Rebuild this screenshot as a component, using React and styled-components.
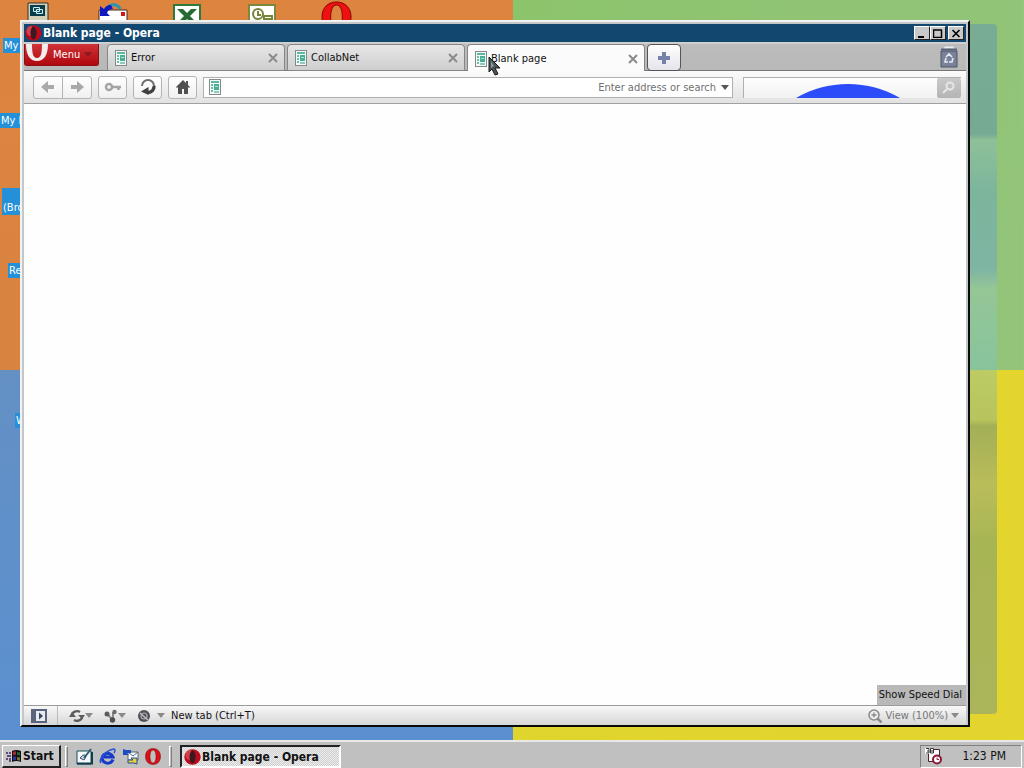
import React, { useState } from "react";
import styled, { createGlobalStyle, css } from "styled-components";

const GlobalStyle = createGlobalStyle`
  * {
    box-sizing: border-box;
  }

  body {
    margin: 0;
    font-family: "DejaVu Sans Condensed", "DejaVu Sans", Tahoma, sans-serif;
    font-size: 11px;
    line-height: 14px;
    color: #111;
  }

  button,
  input {
    font: inherit;
    color: inherit;
    margin: 0;
    padding: 0;
  }

  svg {
    display: block;
    flex: none;
  }
`;

const OperaIcon = () => (
  <svg width="17" height="16" viewBox="0 0 16 16" preserveAspectRatio="none">
    <ellipse cx="8" cy="8" rx="7.7" ry="7.8" fill="#b80c1c" />
    <ellipse cx="5" cy="6" rx="3.6" ry="5" fill="#e8606a" opacity="0.6" />
    <ellipse cx="8" cy="8" rx="2.8" ry="6.4" fill="#3c1820" />
  </svg>
);

const OperaRing = ({ width, height, color }) => (
  <svg width={width} height={height} viewBox="0 0 32 32" preserveAspectRatio="none">
    <path
      fillRule="evenodd"
      fill={color}
      stroke="#7c0808"
      strokeWidth="1"
      d="M16 1C7 1 1 7 1 16s6 15 15 15 15-6 15-15S25 1 16 1zM16 4c4 0 6 5 6 12s-2 12-6 12-6-5-6-12 2-12 6-12z"
    />
  </svg>
);

const MenuRing = () => (
  <svg width="24" height="18" viewBox="0 0 24 18">
    <path
      fill="#f3ecec"
      d="M1 0c0 11 4 17 11 17S23 11 23 0h-6c0 9-1 14-5 14S7 9 7 0z"
    />
  </svg>
);

const PageIcon = () => (
  <svg width="12" height="16" viewBox="0 0 12 16">
    <rect x="0.5" y="0.5" width="11" height="15" fill="#f4faf8" stroke="#85898c" />
    <rect x="2" y="2" width="8" height="2" fill="#5cb9a0" />
    <path d="M3 5v9" stroke="#6bbfa8" strokeWidth="2" strokeDasharray="2 1" />
    <rect x="5" y="5" width="5" height="6" fill="#46b096" />
    <path d="M6 7.5h3" stroke="#b5ddd2" />
    <path d="M5 13h5" stroke="#8accb9" strokeWidth="2" />
  </svg>
);

const CloseIcon = () => (
  <svg width="10" height="10" viewBox="0 0 10 10">
    <path d="M1 1l8 8M9 1l-8 8" stroke="#8b8b8b" strokeWidth="2" />
  </svg>
);

const Arrow = ({ flip }) => (
  <svg width="16" height="14" viewBox="0 0 16 14">
    <path
      d="M1 7l7-6v4h6v4H8v4z"
      fill="#a9a9a9"
      transform={flip ? "matrix(-1 0 0 1 16 0)" : undefined}
    />
  </svg>
);

const KeyIcon = () => (
  <svg width="18" height="12" viewBox="0 0 18 12">
    <circle cx="5" cy="6" r="3" fill="none" stroke="#a5a5a5" strokeWidth="2.6" />
    <path d="M8 6h9M14.5 6v3" stroke="#a5a5a5" strokeWidth="2.6" />
  </svg>
);

const ReloadIcon = () => (
  <svg width="18" height="18" viewBox="0 0 18 18">
    <path d="M3 8A6 6 0 0 1 15 8" fill="none" stroke="#6c6c6c" strokeWidth="2" />
    <path d="M15 8a6 6 0 0 1-6 6.500" fill="none" stroke="#404040" strokeWidth="3.400" />
    <path d="M9.500 9v8L2 13.500z" fill="#404040" />
  </svg>
);

const HomeIcon = () => (
  <svg width="16" height="16" viewBox="0 0 16 16">
    <path d="M8 1l7 7-1 1-1-1v7H9v-5H7v5H3V8L2 9 1 8zM11 2h2v4l-2-2z" fill="#505050" />
  </svg>
);

const PlusIcon = () => (
  <svg width="12" height="12" viewBox="0 0 12 12">
    <path d="M4 0h4v4h4v4H8v4H4V8H0V4h4z" fill="#7680a8" />
  </svg>
);

const TrashIcon = () => (
  <svg width="18" height="22" viewBox="0 0 18 22">
    <path d="M5.5 3V1.5h7V3" fill="none" stroke="#e8eef8" strokeWidth="2" />
    <path d="M1 3.5h16" stroke="#5c6478" strokeWidth="2" />
    <path d="M1 5h16v16H1z" fill="#7a829a" stroke="#4c5468" />
    <path
      d="M6 11l3-3 3 3M13 12l-1 4H9M8 16H5l1-4"
      fill="none"
      stroke="#e4e9f4"
      strokeWidth="1.6"
    />
  </svg>
);

const SearchIcon = () => (
  <svg width="16" height="14" viewBox="0 0 16 14">
    <circle cx="9" cy="5" r="3.5" fill="none" stroke="#e6e6e6" strokeWidth="2" />
    <path d="M6 8l-4 4" stroke="#e6e6e6" strokeWidth="2" />
  </svg>
);

const Caret = ({ color = "#8a8a8a" }) => (
  <svg width="8" height="5" viewBox="0 0 8 5">
    <path d="M0 0h8L4 5z" fill={color} />
  </svg>
);

const PanelIcon = () => (
  <svg width="16" height="14" viewBox="0 0 16 14">
    <rect x="1" y="1" width="14" height="12" fill="#e8ebf0" stroke="#5a647c" strokeWidth="2" />
    <rect x="1" y="1" width="4" height="12" fill="#5a647c" />
    <path d="M8 3.5l4 3.5-4 3.5z" fill="#38445c" />
  </svg>
);

const SyncIcon = () => (
  <svg width="16" height="14" viewBox="0 0 16 14">
    <path d="M3 6a5 4 0 0 1 8-3M13 8a5 4 0 0 1-8 3" fill="none" stroke="#5c5c5c" strokeWidth="2.4" />
    <path d="M9 6h7l-3 4zM0 8h7l-4-5z" fill="#5c5c5c" />
  </svg>
);

const ShareIcon = () => (
  <svg width="14" height="14" viewBox="0 0 14 14">
    <path d="M3 5l6 6M9 3l0 8" stroke="#8c8c8c" strokeWidth="2" />
    <circle cx="3" cy="5" r="2.5" fill="#5c5c5c" />
    <circle cx="10.500" cy="3" r="2.200" fill="#6c6c6c" />
    <circle cx="8.500" cy="11" r="2.700" fill="#505050" />
  </svg>
);

const TurboIcon = () => (
  <svg width="14" height="14" viewBox="0 0 14 14">
    <circle cx="7" cy="7" r="6" fill="#505058" />
    <circle cx="7" cy="7" r="3" fill="none" stroke="#aaaab2" strokeWidth="1.2" />
    <path d="M3 4l8 7" stroke="#c0c0c8" strokeWidth="1.3" />
  </svg>
);

const ZoomIcon = () => (
  <svg width="14" height="14" viewBox="0 0 14 14">
    <circle cx="6" cy="6" r="5" fill="#eee" stroke="#8a8a8a" strokeWidth="1.5" />
    <path d="M3.500 6h5M6 3.500v5" stroke="#8a8a8a" strokeWidth="1.300" />
    <path d="M9.500 9.500l4 4" stroke="#8a8a8a" strokeWidth="2.500" />
  </svg>
);

const Cursor = () => (
  <svg width="13" height="21" viewBox="0 0 13 21">
    <path d="M1 1v15l3-3 3 6 3-1-3-6h5z" fill="#4c5658" stroke="#16191a" />
    <path d="M3 5v7l3-2z" fill="#85979a" />
  </svg>
);

const ComputerIcon = () => (
  <svg width="22" height="20" viewBox="0 0 22 20">
    <path d="M1 2h20v18H1z" fill="#d4d0b8" stroke="#333" />
    <path d="M3 4h15v11H3z" fill="#073c48" />
    <path d="M6.500 6.500h6v4h-6zM9.500 8.500h6v4h-6z" fill="#164a58" stroke="#c8f0f0" />
  </svg>
);

const MailIcon = () => (
  <svg width="30" height="20" viewBox="0 0 30 20">
    <path d="M1 8h28v12H1z" fill="#fff" stroke="#4a2a18" />
    <path d="M23 10h4v4h-4z" fill="#d01818" />
    <path d="M10 6c2-5 10-4 12 1" fill="none" stroke="#2b94b0" strokeWidth="3" />
    <path d="M2 4v10h10l-3-3c1-3 3-4 6-4l-2-4c-4 0-6 2-7 4z" fill="#1018c0" />
  </svg>
);

const ExcelIcon = () => (
  <svg width="28" height="20" viewBox="0 0 28 20">
    <rect x="1" y="1" width="26" height="20" fill="#fff" stroke="#2f7a3a" strokeWidth="2" />
    <path d="M4 5h6l4 4 4-4h6l-7 7 7 7h-6l-4-4-4 4H4l7-7z" fill="#276b34" />
  </svg>
);

const OutlookIcon = () => (
  <svg width="28" height="20" viewBox="0 0 28 20">
    <rect x="1" y="1" width="26" height="20" fill="#fff" stroke="#7a8a3a" strokeWidth="2" />
    <circle cx="10" cy="10" r="5" fill="none" stroke="#77853b" strokeWidth="2" />
    <path d="M10 7v4h3M16 12h8v3h-8zM22 14v5" fill="none" stroke="#77853b" strokeWidth="2" />
  </svg>
);

const WindowsIcon = () => (
  <svg width="16" height="14" viewBox="0 0 16 14">
    <path d="M6 2q4-2 9 0v11q-5-2-9 0z" fill="#111" />
    <path d="M7 3q2-1 3-.5V6q-1-.5-3 .5z" fill="#a82838" />
    <path d="M11 3q2 0 3 .5V7q-1-1-3-1z" fill="#206838" />
    <path d="M7 8q2-1 3-.5V11q-1-.5-3 .5z" fill="#2838a0" />
    <path d="M11 8q2 0 3 .5V12q-1-1-3-1z" fill="#807030" />
    <path d="M0 4h2M3 4h2M1 7h4M0 10h2M3 10h2M3 12h2" stroke="#402060" strokeWidth="1.500" />
  </svg>
);

const NoteIcon = () => (
  <svg width="17" height="17" viewBox="0 0 17 17">
    <path d="M1 3h14v13H1z" fill="#f4f8f8" stroke="#1c4c60" />
    <path d="M1 15.500h15V4" fill="none" stroke="#123c50" strokeWidth="2" />
    <path d="M4 10q3-4 5-3t-1 5z" fill="#c5dde0" stroke="#447" />
    <path d="M8 10l7-9" stroke="#2c6070" strokeWidth="2" />
  </svg>
);

const ExplorerIcon = () => (
  <svg width="17" height="17" viewBox="0 0 17 17">
    <path d="M14 11.500A5.500 5 0 1 1 14 9H5" fill="none" stroke="#1838c8" strokeWidth="3" />
    <path d="M2 15C-1 12 7 2 15 1q2 1 0 4" fill="none" stroke="#2452d8" strokeWidth="1.500" />
  </svg>
);

const OutlookExpressIcon = () => (
  <svg width="17" height="17" viewBox="0 0 17 17">
    <path d="M6 4h10v8H6z" fill="#fff" stroke="#567" />
    <path d="M6 4l5 4 5-4" fill="none" stroke="#567" />
    <path d="M1 1v6h6L5 5h4V2H4z" fill="#1c4cc0" />
    <path d="M15 16v-6H9l2 2H6v3h6z" fill="#e4d040" stroke="#234a90" />
  </svg>
);

const SchedulerIcon = () => (
  <svg width="18" height="18" viewBox="0 0 18 18">
    <path d="M3.500 2.500h11v12h-11z" fill="#fff" stroke="#502030" />
    <path d="M0 1h9v6H0z" fill="#fff" />
    <path d="M1 1.500h3V6H1M2 4h2M5.500 1.500h3v4.500h-3zM6 4h2" fill="none" stroke="#333" />
    <circle cx="12" cy="12.500" r="4" fill="#fff" stroke="#8c1838" strokeWidth="2" />
    <path d="M12 10.500v2h2" fill="none" stroke="#8c1838" />
  </svg>
);

const Screen = styled.div`
  min-height: 100vh;
  display: flex;
  flex-direction: column;
`;

const Desktop = styled.main`
  position: relative;
  flex: 1;
  display: flex;
  padding: 20px 54px 13px 20px;
  overflow: hidden;
  background: linear-gradient(#dd843f, #d98341) 0 0 / 50.1% 50% no-repeat,
    linear-gradient(100deg, #8cc46c, #93c47a) 100% 0 / 49.9% 50% no-repeat,
    linear-gradient(#6490c4, #5a90d0) 0 100% / 50.1% 50% no-repeat,
    linear-gradient(90deg, #dfd52d, #e4d42e) 100% 100% / 49.9% 50% no-repeat;
`;

const GlassPanel = styled.div`
  position: absolute;
  inset: 24px 27px 26px 60px;
  border-radius: 4px;
  background: linear-gradient(
    rgba(100, 152, 170, 0.55) 0,
    rgba(100, 152, 165, 0.6) 110px,
    rgba(140, 190, 175, 0.6) 116px,
    rgba(112, 172, 175, 0.65) 170px,
    rgba(116, 172, 185, 0.65) 245px,
    rgba(150, 200, 170, 0.6) 265px,
    rgba(130, 195, 180, 0.6) 345px,
    rgba(150, 195, 150, 0.5) 347px,
    rgba(140, 180, 140, 0.5) 396px,
    rgba(120, 150, 115, 0.6) 402px,
    rgba(150, 170, 125, 0.55) 460px,
    rgba(128, 160, 110, 0.6) 520px,
    rgba(134, 160, 120, 0.6) 100%
  );
`;

const Shortcut = styled.div`
  position: absolute;
  left: ${(p) => p.$left}px;
  top: ${(p) => p.$top}px;
`;

const ShortcutLabel = styled(Shortcut)`
  padding: ${(p) => (p.$tall ? "13px" : "1px")} 2px 0 1px;
  background: #2490d8;
  color: #fff;
  white-space: nowrap;
`;

const Window = styled.section`
  position: relative;
  flex: 1;
  min-width: 0;
  display: flex;
  flex-direction: column;
  padding: 2px 2px 0;
  background: #c3c7c9;
  border: 2px solid;
  border-color: #f2f2f2 #0a0a0a #0a0a0a #f2f2f2;
`;

const TitleBar = styled.header`
  display: flex;
  align-items: center;
  height: 18px;
  padding: 0 2px 0 1px;
  background: #12486f;
  color: #fff;
  font-size: 12px;
  font-weight: bold;
`;

const TitleText = styled.h1`
  flex: 1;
  margin: 0 0 0 1px;
  font: inherit;
  font-weight: bold;
`;

const raised = css`
  background: #c9c9c9;
  border: 1px solid;
  border-color: #fff #222 #222 #fff;
`;

const CaptionButton = styled.button`
  ${raised}
  display: grid;
  place-items: center;
  width: 16px;
  height: 14px;
  margin-left: ${(p) => (p.$spaced ? "2px" : "0")};
`;

const TabBar = styled.nav`
  display: flex;
  height: 29px;
  padding-right: 8px;
  border-top: 2px solid #cfcfcf;
  border-bottom: 1px solid #777;
  background: linear-gradient(#bcbcbc, #b8b8b8);
`;

const MenuButton = styled.button`
  display: flex;
  align-items: center;
  gap: 4px;
  width: 75px;
  height: 22px;
  margin-right: 8px;
  border: 1px solid #8a1016;
  border-top: 0;
  border-radius: 0 0 3px 3px;
  background: linear-gradient(#cf3338, #b0080f);
  color: #fff;

  svg:first-child {
    align-self: flex-start;
  }
`;

const Tab = styled.div`
  display: flex;
  align-items: center;
  gap: 4px;
  width: 178px;
  height: ${(p) => (p.$active ? "28px" : "27px")};
  margin-right: 2px;
  padding: 0 6px 0 7px;
  border: 1px solid #868686;
  border-bottom-width: ${(p) => (p.$active ? "0" : "1px")};
  border-radius: 4px 4px 0 0;
  background: ${(p) =>
    p.$active ? "#fbfbfb" : "linear-gradient(#e6e6e6, #cfcfcf)"};
`;

const TabLabel = styled.button`
  flex: 1;
  display: flex;
  align-items: center;
  gap: 4px;
  border: 0;
  background: none;
  text-align: left;
`;

const PlainButton = styled.button`
  display: flex;
  align-items: center;
  gap: ${(p) => p.$gap || 0}px;
  border: 0;
  background: none;
  color: ${(p) => p.$color || "inherit"};
`;

const NewTab = styled.button`
  display: grid;
  place-items: center;
  width: 34px;
  height: 27px;
  border: 1px solid #555;
  border-radius: 4px;
  background: linear-gradient(#fff, #e4e4ea);
`;

const Spacer = styled.span`
  flex: 1;
`;

const Toolbar = styled.form`
  display: flex;
  align-items: center;
  gap: 6px;
  height: 33px;
  padding: 0 5px 0 9px;
  border-bottom: 1px solid #a0a0a0;
  background: linear-gradient(#fbfbfb, #e2e2e2);
`;

const ButtonGroup = styled.div`
  display: flex;
  width: ${(p) => (p.$pair ? "59px" : "29px")};
  height: 23px;
  border: 1px solid #b4b4b4;
  border-radius: 3px;
  background: linear-gradient(#fff, #f0f0f0);
`;

const ToolButton = styled.button`
  flex: 1;
  display: grid;
  place-items: center;
  border: 0;
  background: none;

  & + & {
    border-left: 1px solid #b4b4b4;
  }
`;

const AddressField = styled.label`
  flex: 1;
  display: flex;
  align-items: center;
  height: 21px;
  padding: 0 3px 0 5px;
  border: 1px solid #b0b0b0;
  background: #fff;
`;

const AddressInput = styled.input`
  flex: 1;
  min-width: 0;
  height: 100%;
  margin: 0 5px;
  padding-top: 1px;
  border: 0;
  outline: 0;
  background: none;
  text-align: right;

  &::placeholder {
    color: #707070;
    opacity: 1;
  }
`;

const SearchField = styled.label`
  flex: 0 1 218px;
  position: relative;
  display: flex;
  height: 21px;
  margin-left: 4px;
  border: 1px solid #b0b0b0;
  border-width: 1px 0 0 1px;
  background: linear-gradient(#fdfdfd, #f2f2f2);
`;

const SearchInput = styled.input`
  flex: 1;
  min-width: 0;
  border: 0;
  outline: 0;
  background: none;
`;

const Bump = styled.svg`
  position: absolute;
  left: 24%;
  bottom: 0;
`;

const SearchButton = styled.button`
  display: grid;
  place-items: center;
  width: 24px;
  border: 0;
  border-radius: 2px;
  background: linear-gradient(#cacaca, #b4b4b4);
`;

const Page = styled.article`
  flex: 1;
  display: flex;
  justify-content: flex-end;
  align-items: flex-end;
  background: #fefefe;
`;

const SpeedDial = styled.button`
  height: 20px;
  padding: 0 4px 0 2px;
  border: 0;
  background: #b9b9b9;
`;

const StatusBar = styled.footer`
  display: flex;
  align-items: center;
  height: 20px;
  padding: 0 7px;
  border-top: 1px solid #9c9c9c;
  background: linear-gradient(#f8f8f8, #d6d6d6);
`;

const StatusTools = styled.div`
  display: flex;
  align-items: center;
  gap: 11px;
  height: 100%;
  margin: 0 6px 0 10px;
  padding-left: 11px;
  border-left: 1px solid #bbb;
`;

const Pointer = styled.div`
  position: absolute;
  left: 466px;
  top: 34px;
  pointer-events: none;
`;

const Taskbar = styled.footer`
  position: relative;
  display: flex;
  align-items: center;
  height: 28px;
  padding: 2px 2px 0;
  border-top: 2px solid #e8e8e8;
  background: #c0c0c0;
`;

const StartButton = styled.button`
  ${raised}
  display: flex;
  align-items: center;
  gap: 1px;
  height: 23px;
  width: 59px;
  padding-left: 3px;
  border-width: 1px 2px 2px 1px;
  font-size: 12px;
  font-weight: bold;
`;

const Grip = styled.span`
  width: 3px;
  height: 21px;
  margin: 0 8px 0 ${(p) => p.$before}px;
  border: 1px solid;
  border-color: #fff #808080 #808080 #fff;
`;

const QuickLaunch = styled.div`
  display: flex;
  gap: 6px;
`;

const TaskButton = styled.button`
  display: flex;
  align-items: center;
  gap: 1px;
  width: 161px;
  height: 23px;
  padding: 1px 0 0 2px;
  border: 2px solid;
  border-color: #222 #fff #fff #222;
  background: repeating-conic-gradient(#ececec 0 25%, #d0d0d0 0 50%) 0 0 / 2px 2px;
  font-size: 12px;
  font-weight: bold;
`;

const Tray = styled.div`
  display: flex;
  align-items: center;
  justify-content: space-between;
  width: 102px;
  height: 23px;
  padding: 0 15px 0 4px;
  border: 1px solid;
  border-color: #808080 #fff #fff #808080;
  font-size: 12px;
`;

const shortcutLabels = [
  { text: "My", left: 3, top: 38 },
  { text: "My I", left: 0, top: 113 },
  { text: "(Bro", left: 2, top: 188, tall: true },
  { text: "Re", left: 8, top: 263 },
  { text: "W", left: 15, top: 413 },
];

const tabs = ["Error", "CollabNet", "Blank page"];

const App = () => {
  const [active, setActive] = useState("Blank page");

  return (
    <Screen>
      <GlobalStyle />
      <Desktop>
        <GlassPanel />
        <Shortcut $left={27} $top={1}><ComputerIcon /></Shortcut>
        <Shortcut $left={98} $top={2}><MailIcon /></Shortcut>
        <Shortcut $left={173} $top={4}><ExcelIcon /></Shortcut>
        <Shortcut $left={248} $top={4}><OutlookIcon /></Shortcut>
        <Shortcut $left={321} $top={1}>
          <OperaRing width={31} height={32} color="#f01010" />
        </Shortcut>
        {shortcutLabels.map((s) => (
          <ShortcutLabel key={s.text} $left={s.left} $top={s.top} $tall={s.tall}>
            {s.text}
          </ShortcutLabel>
        ))}
        <Window>
          <TitleBar>
            <OperaIcon />
            <TitleText>Blank page - Opera</TitleText>
            <CaptionButton type="button" aria-label="Minimize">
              <svg width="10" height="9" viewBox="0 0 10 9">
                <path d="M1 7h6v2H1z" />
              </svg>
            </CaptionButton>
            <CaptionButton type="button" aria-label="Maximize">
              <svg width="10" height="9" viewBox="0 0 10 9">
                <path d="M.5 1v7.500h8V1M0 1h9" fill="none" stroke="#000" strokeWidth="1.500" />
              </svg>
            </CaptionButton>
            <CaptionButton type="button" aria-label="Close" $spaced>
              <svg width="10" height="9" viewBox="0 0 10 9">
                <path d="M1.500 1l7 7M8.500 1l-7 7" stroke="#000" strokeWidth="1.600" />
              </svg>
            </CaptionButton>
          </TitleBar>
          <TabBar>
            <MenuButton type="button">
              <MenuRing />
              Menu
              <Caret color="#8c1a1e" />
            </MenuButton>
            {tabs.map((name) => (
              <Tab key={name} $active={name === active}>
                <TabLabel type="button" onClick={() => setActive(name)}>
                  <PageIcon />
                  {name}
                </TabLabel>
                <PlainButton type="button" aria-label={`Close ${name}`}>
                  <CloseIcon />
                </PlainButton>
              </Tab>
            ))}
            <NewTab type="button" aria-label="New tab"><PlusIcon /></NewTab>
            <Spacer />
            <PlainButton type="button" aria-label="Closed tabs"><TrashIcon /></PlainButton>
          </TabBar>
          <Toolbar onSubmit={(e) => e.preventDefault()}>
            <ButtonGroup $pair>
              <ToolButton type="button" aria-label="Back"><Arrow /></ToolButton>
              <ToolButton type="button" aria-label="Forward"><Arrow flip /></ToolButton>
            </ButtonGroup>
            <ButtonGroup>
              <ToolButton type="button" aria-label="Wand"><KeyIcon /></ToolButton>
            </ButtonGroup>
            <ButtonGroup>
              <ToolButton type="button" aria-label="Reload"><ReloadIcon /></ToolButton>
            </ButtonGroup>
            <ButtonGroup>
              <ToolButton type="button" aria-label="Home"><HomeIcon /></ToolButton>
            </ButtonGroup>
            <AddressField>
              <PageIcon />
              <AddressInput aria-label="Address" placeholder="Enter address or search" />
              <Caret color="#555" />
            </AddressField>
            <SearchField>
              <SearchInput aria-label="Search" />
              <Bump width="104" height="15" viewBox="0 0 104 15">
                <path d="M0 15Q24 1 52 1t52 14z" fill="#2b4cf8" />
              </Bump>
              <SearchButton aria-label="Go"><SearchIcon /></SearchButton>
            </SearchField>
          </Toolbar>
          <Page>
            <SpeedDial type="button">Show Speed Dial</SpeedDial>
          </Page>
          <StatusBar>
            <PlainButton type="button" aria-label="Panels"><PanelIcon /></PlainButton>
            <StatusTools>
              <PlainButton type="button" aria-label="Synchronize"><SyncIcon /><Caret /></PlainButton>
              <PlainButton type="button" aria-label="Unite"><ShareIcon /><Caret /></PlainButton>
              <PlainButton type="button" aria-label="Turbo" $gap={6}><TurboIcon /><Caret /></PlainButton>
            </StatusTools>
            <span>New tab (Ctrl+T)</span>
            <Spacer />
            <PlainButton type="button" $gap={3} $color="#777">
              <ZoomIcon />
              View (100%)
              <Caret />
            </PlainButton>
          </StatusBar>
          <Pointer><Cursor /></Pointer>
        </Window>
      </Desktop>
      <Taskbar>
        <StartButton type="button"><WindowsIcon />Start</StartButton>
        <Grip $before={4} />
        <QuickLaunch>
          <PlainButton type="button" aria-label="Show Desktop"><NoteIcon /></PlainButton>
          <PlainButton type="button" aria-label="Internet Explorer"><ExplorerIcon /></PlainButton>
          <PlainButton type="button" aria-label="Outlook Express"><OutlookExpressIcon /></PlainButton>
          <PlainButton type="button" aria-label="Opera">
            <OperaRing width={16} height={17} color="#d81018" />
          </PlainButton>
        </QuickLaunch>
        <Grip $before={8} />
        <TaskButton type="button"><OperaIcon />Blank page - Opera</TaskButton>
        <Spacer />
        <Tray>
          <SchedulerIcon />
          <time>1:23 PM</time>
        </Tray>
      </Taskbar>
    </Screen>
  );
};

export default App;
